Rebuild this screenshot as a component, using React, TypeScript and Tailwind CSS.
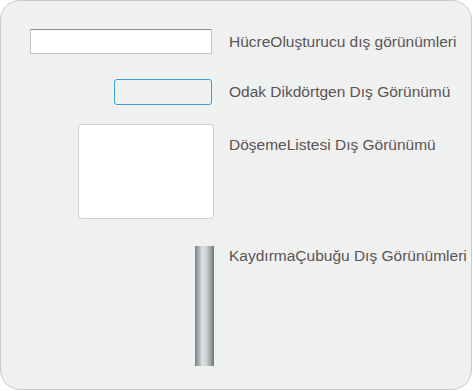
import React from 'react';

// tiny preview pane of the skin list
const rowText = 'text-[15.5px] leading-[18px] text-[#5b5454] whitespace-nowrap';

const App: React.FC = () => {
    return (
        <div className="w-[473px] h-[391px] bg-white" style={{ fontFamily: '"Liberation Sans", Arial, sans-serif' }}>
            <div className="w-[472px] h-[390px] rounded-[20px] border border-[#c9c9c9] bg-[#eff0f0] pt-[28px]">
                {/* cell builder */}
                <div className="flex items-center">
                    <div className="w-[211px] flex justify-end">
                        <div className="w-[182px] h-[25px] bg-white border border-[#c4c4c4] border-t-[#8d8d8d]"></div>
                    </div>
                    <p className={'ml-[17px] ' + rowText}>HücreOluşturucu dış görünümleri</p>
                </div>

                {/* focus rect */}
                <div className="flex items-center mt-[25px]">
                    <div className="w-[211px] flex justify-end">
                        <div className="w-[98px] h-[26px] rounded-[3px] border-[1.5px] border-[#3a9ee0]"></div>
                    </div>
                    <p className={'ml-[17px] ' + rowText}>Odak Dikdörtgen Dış Görünümü</p>
                </div>

                {/* tile list */}
                <div className="flex items-start mt-[19px]">
                    <div className="w-[213px] flex justify-end">
                        <div className="w-[136px] h-[95px] rounded-[4px] bg-white border border-[#d0d0d0]"></div>
                    </div>
                    <p className={'ml-[15px] mt-[12px] ' + rowText}>DöşemeListesi Dış Görünümü</p>
                </div>

                {/* scrollbar */}
                <div className="flex items-start mt-[27px]">
                    <div className="w-[213px] flex justify-end">
                        <div className="w-[19px] h-[120px] bg-[linear-gradient(to_right,#7a8288_0%,#a3a9ad_18%,#dfe2e3_38%,#cdd1d2_60%,#9ca2a6_82%,#6d747a_100%)]"></div>
                    </div>
                    <p className={'ml-[15px] mt-[1px] ' + rowText}>KaydırmaÇubuğu Dış Görünümleri</p>
                </div>
            </div>
        </div>
    );
};

export default App;
